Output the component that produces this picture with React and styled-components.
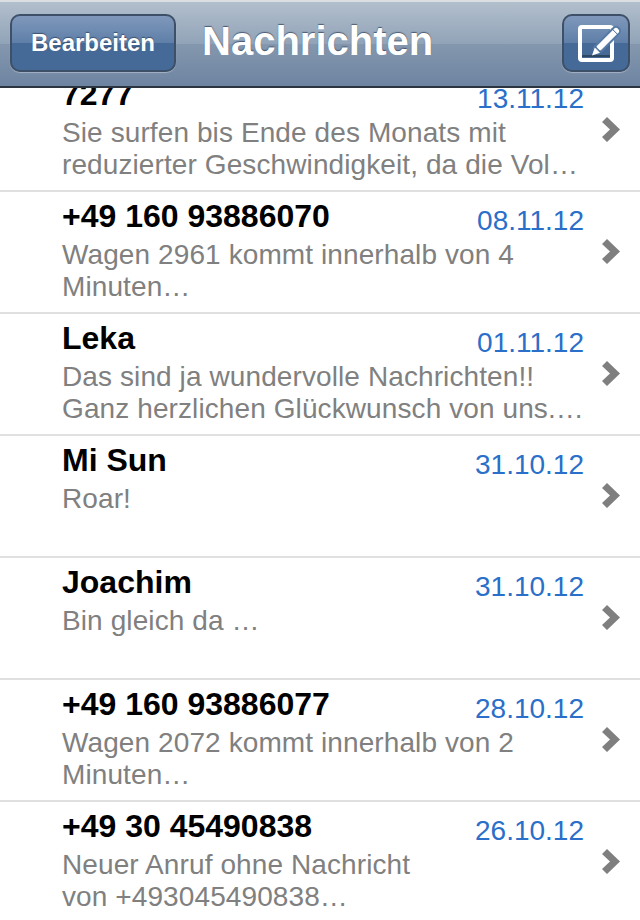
import React from 'react';
import styled, { createGlobalStyle } from 'styled-components';

const GlobalStyle = createGlobalStyle`
  html, body {
    margin: 0;
    padding: 0;
    background: #fff;
    font-family: 'Liberation Sans', Arial, sans-serif;
  }
`;

const Screen = styled.div`
  width: 640px;
  height: 920px;
  overflow: hidden;
  background: #fff;
`;

const NavBar = styled.header`
  position: relative;
  z-index: 2;
  box-sizing: border-box;
  height: 88px;
  display: flex;
  align-items: center;
  justify-content: space-between;
  padding: 0 10px 3px 10px;
  border-top: 2px solid #dcdfe2;
  border-bottom: 2px solid #2b3440;
  background: linear-gradient(
    to bottom,
    #b2bfcc 0%,
    #91a3b8 50%,
    #8497ae 50%,
    #6d84a1 100%
  );
`;

const BarButton = styled.button`
  box-sizing: border-box;
  height: 58px;
  width: ${({ width }) => width};
  padding: 0;
  display: flex;
  align-items: center;
  justify-content: center;
  border: 2px solid #3d5068;
  border-radius: 10px;
  color: #fff;
  font-family: inherit;
  font-size: 24px;
  font-weight: bold;
  text-shadow: 0 -1px 1px rgba(30, 45, 70, 0.6);
  background: linear-gradient(
    to bottom,
    #7f98bb 0%,
    #5f7fa8 50%,
    #466a98 50%,
    #466a98 100%
  );
  box-shadow: 0 1px 1px rgba(255, 255, 255, 0.35);
`;

const Title = styled.h1`
  flex: 1;
  margin: 0 0 4px 26px;
  color: #fff;
  font-size: 40px;
  font-weight: bold;
  line-height: 48px;
  text-shadow: 0 -1px 1px rgba(40, 55, 80, 0.7);
`;

const List = styled.ul`
  position: relative;
  z-index: 1;
  list-style: none;
  margin: -18px 0 0;
  padding: 0;
`;

const Row = styled.li`
  box-sizing: border-box;
  height: 122px;
  display: flex;
  padding: 0 0 0 62px;
  position: relative;
  border-bottom: 2px solid #e0e0e0;
`;

const Body = styled.div`
  width: 522px;
  padding-top: 6px;
`;

const Head = styled.div`
  display: flex;
  justify-content: space-between;
  align-items: flex-start;
  height: 41px;
`;

const Name = styled.span`
  color: #000;
  font-size: 32px;
  font-weight: bold;
  line-height: 36px;
`;

const Date = styled.span`
  color: #2a6fc9;
  font-size: 28px;
  line-height: 32px;
  margin-top: 7px;
`;

const Message = styled.p`
  margin: 0;
  width: 522px;
  color: #808080;
  font-size: 28px;
  line-height: 32px;
  letter-spacing: 0.1px;
  white-space: pre-line;
`;

const Chevron = styled.svg`
  position: absolute;
  right: 20px;
  top: 47px;
  width: 18px;
  height: 25px;
`;

const ComposeSvg = styled.svg`
  width: 44px;
  height: 42px;
  overflow: visible;
`;

const messages = [
  { name: '7277', date: '13.11.12', text: 'Sie surfen bis Ende des Monats mit\nreduzierter Geschwindigkeit, da die Vol…' },
  { name: '+49 160 93886070', date: '08.11.12', text: 'Wagen 2961 kommt innerhalb von 4\nMinuten…' },
  { name: 'Leka', date: '01.11.12', text: 'Das sind ja wundervolle Nachrichten!!\nGanz herzlichen Glückwunsch von uns.…' },
  { name: 'Mi Sun', date: '31.10.12', text: 'Roar!' },
  { name: 'Joachim', date: '31.10.12', text: 'Bin gleich da …' },
  { name: '+49 160 93886077', date: '28.10.12', text: 'Wagen 2072 kommt innerhalb von 2\nMinuten…' },
  { name: '+49 30 45490838', date: '26.10.12', text: 'Neuer Anruf ohne Nachricht\nvon +493045490838…' },
];

function ComposeIcon() {
  return (
    <ComposeSvg viewBox='0 0 44 42'>
      <rect x='6' y='5' width='32' height='33' rx='2' fill='none' stroke='#fff' strokeWidth='4' />
      <rect x='8' y='33' width='28' height='2' fill='#2f4660' />
      {/* blue halo keeps the pencil apart from the square */}
      <path d='M24 27 L42 9' stroke='#557aa6' strokeWidth='10' strokeLinecap='round' />
      <path d='M25.5 25.5 L42 9' stroke='#fff' strokeWidth='6' strokeLinecap='round' />
      <path d='M18 33.5 L20.8 25.5 L26 30.7 Z' fill='#fff' />
      <path d='M21.2 24.6 L26.9 30.3' stroke='#466a98' strokeWidth='1.2' />
      <path d='M38 6.8 L44 12.8' stroke='#466a98' strokeWidth='1' />
    </ComposeSvg>
  );
}

function App() {
  return (
    <Screen>
      <GlobalStyle />
      <NavBar>
        <BarButton width='166px'>Bearbeiten</BarButton>
        <Title>Nachrichten</Title>
        <BarButton width='68px' aria-label='Verfassen'>
          <ComposeIcon />
        </BarButton>
      </NavBar>
      <List>
        {messages.map((m) => (
          <Row key={m.name}>
            <Body>
              <Head>
                <Name>{m.name}</Name>
                <Date>{m.date}</Date>
              </Head>
              <Message>{m.text}</Message>
            </Body>
            <Chevron viewBox='0 0 18 25'>
              <path d='M0 5 L5 0 L18 12.5 L5 25 L0 20 L8 12.5 Z' fill='#7f7f7f' />
            </Chevron>
          </Row>
        ))}
      </List>
    </Screen>
  );
}

export default App;
